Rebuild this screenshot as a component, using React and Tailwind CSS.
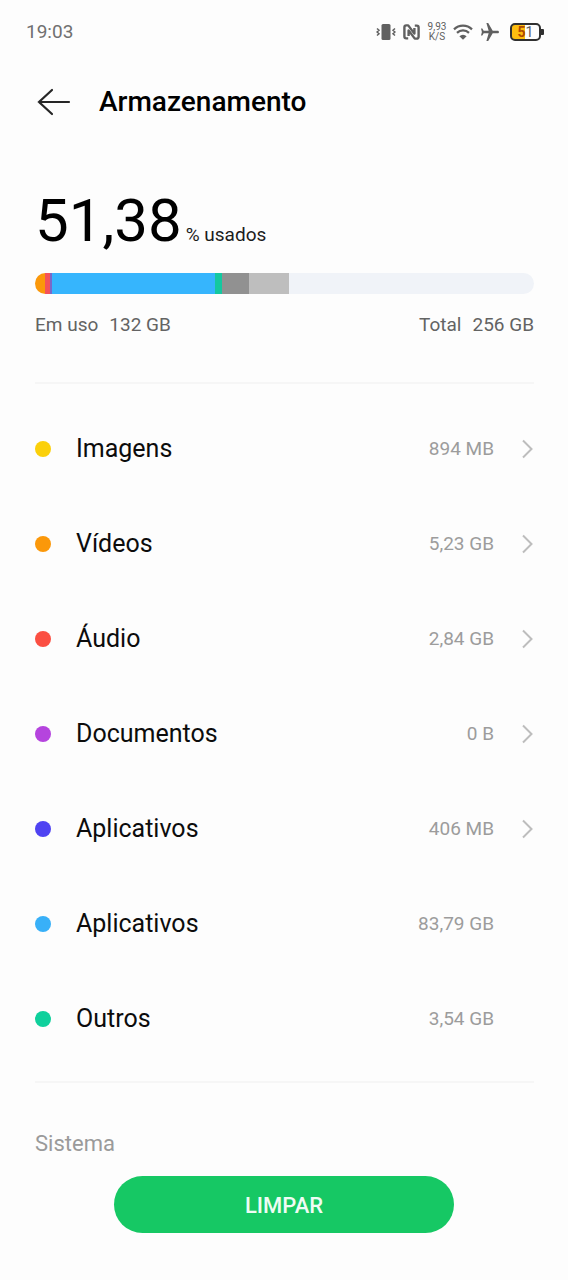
const categories = [
  { id: "images", name: "Imagens", size: "894 MB", dot: "bg-[#fbd00b]", link: true },
  { id: "videos", name: "Vídeos", size: "5,23 GB", dot: "bg-[#fb980a]", link: true },
  { id: "audio", name: "Áudio", size: "2,84 GB", dot: "bg-[#fb4f42]", link: true },
  { id: "documents", name: "Documentos", size: "0 B", dot: "bg-[#b544de]", link: true },
  { id: "apks", name: "Aplicativos", size: "406 MB", dot: "bg-[#4f43f2]", link: true },
  { id: "apps", name: "Aplicativos", size: "83,79 GB", dot: "bg-[#38b0f8]", link: false },
  { id: "others", name: "Outros", size: "3,54 GB", dot: "bg-[#0fd09c]", link: false }
]

// share of the whole disk, in percent
const segments = [
  { id: "videos", color: "bg-[#fb980a]", percent: 2.1 },
  { id: "audio", color: "bg-[#f4525a]", percent: 0.9 },
  { id: "apks", color: "bg-[#7a68c8]", percent: 0.5 },
  { id: "apps", color: "bg-[#36b5fd]", percent: 32.6 },
  { id: "others", color: "bg-[#14c8a0]", percent: 1.4 },
  { id: "system", color: "bg-[#919191]", percent: 5.4 },
  { id: "reserved", color: "bg-[#bebebe]", percent: 8.1 }
]

function StatusBar() {
  return (
    <div className="flex h-16 items-center justify-between pr-6 pl-[26px] text-[#707070]">
      <span className="text-[19px] leading-6">19:03</span>

      <div className="flex items-center text-[#606060]">
        <svg width="20" height="18" viewBox="0 0 20 18" fill="none" stroke="currentColor">
          <rect x="5.5" y="1" width="9" height="16" rx="1.5" fill="currentColor" stroke="none" />
          <path d="M1 5.5l2 1.7-2 1.8 2 1.8-2 1.7M19 5.5l-2 1.7 2 1.8-2 1.8 2 1.7" strokeWidth="1.5" />
        </svg>

        <svg className="ml-[7px]" width="17" height="16" viewBox="0 0 17 16" fill="none" stroke="currentColor" strokeWidth="2.4" strokeLinejoin="round">
          <path d="M5.2 14.4H3.2a1.8 1.8 0 0 1-1.8-1.8V3.2a1.8 1.8 0 0 1 1.8-1.8H5.2L11.4 9.6V4" />
          <path d="M11.8 1.6h2a1.8 1.8 0 0 1 1.8 1.8v9.4a1.8 1.8 0 0 1-1.8 1.8h-2L5.6 6.4V12" />
        </svg>

        <div className="ml-1.5 flex w-[22px] flex-col items-center text-[10px] leading-[10px]">
          <span>9,93</span>
          <span>K/S</span>
        </div>

        <svg className="ml-[5px]" width="20" height="16" viewBox="0 0 20 16" fill="none" stroke="currentColor" strokeWidth="2.2">
          <path d="M1 5.4a12.8 12.8 0 0 1 18 0M4 8.9a8.5 8.5 0 0 1 12 0" />
          <path d="M10 15.8L6.4 12.2a5 5 0 0 1 7.2 0z" fill="currentColor" stroke="none" />
        </svg>

        <svg className="ml-2" width="18" height="18" viewBox="2 2 20 20">
          <path
            transform="rotate(90 12 12)"
            d="M22 16v-2l-8.5-5V3.5c0-.83-.67-1.5-1.5-1.5s-1.5.67-1.5 1.5V9L2 14v2l8.5-2.5V19L8 20.5V22l4-1 4 1v-1.5L13.5 19v-5.5L22 16z"
            fill="currentColor"
          />
        </svg>

        <div className="ml-[11px] flex items-center">
          <div className="flex h-[18px] w-[31px] items-center justify-center rounded-[5px] border-2 border-[#303030] bg-linear-to-r from-[#fdbd10] from-50% to-[#fdfdfd] to-50% text-[14px] leading-[14px]">
            <span className="font-bold text-[#b04a00]">5</span>
            <span>1</span>
          </div>
          <div className="h-1.5 w-[3px] rounded-r-[1px] bg-[#303030]" />
        </div>
      </div>
    </div>
  )
}

function Chevron() {
  return (
    <svg width="12" height="20" viewBox="0 0 12 20" fill="none" stroke="#bdbdbd" strokeWidth="2">
      <path d="M1 1.5L9.5 10L1 18.5" />
    </svg>
  )
}

function CategoryRow({ item }) {
  const content = (
    <>
      <span className={`size-4 rounded-full ${item.dot}`} />
      <span className="ml-[25px] flex-1 text-[25px] leading-8 text-[#0c0c0c]">{item.name}</span>
      <span className="text-[19px] leading-6 text-[#9c9c9c]">{item.size}</span>
      <span className="ml-7 w-3">{item.link && <Chevron />}</span>
    </>
  )

  return (
    <li>
      {item.link ? (
        <a href={`#${item.id}`} className="flex h-[95px] items-center">{content}</a>
      ) : (
        <div className="flex h-[95px] items-center">{content}</div>
      )}
    </li>
  )
}

export default function App() {
  return (
    <div className="flex min-h-screen flex-col bg-[#fdfdfd] font-[Roboto,sans-serif] text-black">
      <StatusBar />

      <header className="flex h-[76px] items-center pl-[37px]">
        <button aria-label="Voltar">
          <svg width="34" height="28" viewBox="0 0 34 28" fill="none" stroke="#262626" strokeWidth="2.2" strokeLinecap="round">
            <path d="M32 14H2M15 2L2 14l13 12" />
          </svg>
        </button>
        <h1 className="ml-7 text-[28px] leading-8 font-medium">Armazenamento</h1>
      </header>

      <main className="flex flex-1 flex-col pr-[34px] pl-[35px]">
        <div className="mt-[46px] flex items-baseline">
          <span className="text-[60px] leading-[70px]">51,38</span>
          <span className="ml-1 text-[19px] leading-6 text-[#1c1c1c]">% usados</span>
        </div>

        <div className="mt-[17px] flex h-[21px] overflow-hidden rounded-full bg-[#f0f3f8]">
          {segments.map((segment) => (
            <div key={segment.id} className={segment.color} style={{ width: `${segment.percent}%` }} />
          ))}
        </div>

        <div className="mt-[19px] flex justify-between text-[19px] leading-6 text-[#636363]">
          <p className="flex gap-[11px]"><span>Em uso</span><span>132 GB</span></p>
          <p className="flex gap-[11px]"><span>Total</span><span>256 GB</span></p>
        </div>

        <ul className="mt-[45px] border-y-2 border-[#f6f6f6] pt-[17px] pb-[15px]">
          {categories.map((item) => (
            <CategoryRow key={item.id} item={item} />
          ))}
        </ul>

        <h2 className="mt-[47px] text-[22px] leading-7 text-[#9a9a9a]">Sistema</h2>
      </main>

      <footer className="flex justify-center pt-[17px] pb-[47px]">
        <button className="h-[57px] w-3/5 rounded-full bg-[#16c864] pt-0.5 text-[22px] font-medium text-[#effcf4]">
          LIMPAR
        </button>
      </footer>
    </div>
  )
}
